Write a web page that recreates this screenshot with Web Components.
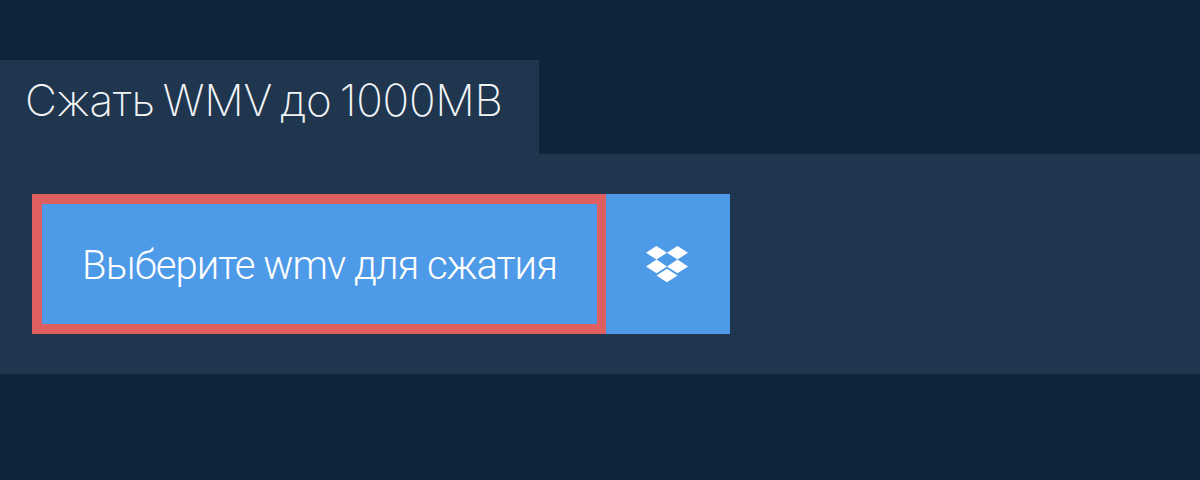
<!DOCTYPE html>
<html lang="ru">
<head>
<meta charset="utf-8">
<title>Сжать WMV</title>
<style>
  html, body { margin: 0; height: 100%; background: #0e2439; }
  body { overflow: hidden; }
</style>
</head>
<body>
<compress-panel heading="Сжать WMV до 1000MB">
  <picker-button>Выберите wmv для сжатия</picker-button>
  <dropbox-button></dropbox-button>
</compress-panel>

<script>
class CompressPanel extends HTMLElement {
  constructor() {
    super();
    this.attachShadow({ mode: 'open' });
  }

  connectedCallback() {
    this.shadowRoot.innerHTML = `
      <style>
        :host {
          display: block;
          padding-top: 60px;
        }

        .tab {
          display: flex;
          align-items: center;
          width: 539px;
          height: 94px;
          box-sizing: border-box;
          padding: 0 0 14px 25px;
          background: #20364f;
          color: #f2f4f6;
          font-family: "Inter", "Roboto", sans-serif;
          font-weight: 200;
          font-size: 44px;
          letter-spacing: -0.25px;
          word-spacing: -4px;
          white-space: nowrap;
        }

        .body {
          display: flex;
          height: 220px;
          box-sizing: border-box;
          padding: 40px 32px;
          background: #20364f;
        }
      </style>

      <div class="tab">${this.getAttribute('heading')}</div>
      <div class="body"><slot></slot></div>
    `;
  }
}

class PickerButton extends HTMLElement {
  constructor() {
    super();
    this.attachShadow({ mode: 'open' });
    this.shadowRoot.innerHTML = `
      <style>
        :host {
          display: flex;
          justify-content: center;
          align-items: center;
          width: 574px;
          height: 140px;
          box-sizing: border-box;
          border: 10px solid #dd5f5f;
          border-right-width: 9px;
          background: #4d9ae8;
          color: #fff;
          font-family: "Roboto", "Liberation Sans", sans-serif;
          font-weight: 300;
          font-size: 40px;
          letter-spacing: -0.97px;
          padding-top: 2px;
          white-space: nowrap;
        }
      </style>
      <slot></slot>
    `;
  }
}

class DropboxButton extends HTMLElement {
  constructor() {
    super();
    this.attachShadow({ mode: 'open' });
    this.shadowRoot.innerHTML = `
      <style>
        :host {
          display: flex;
          justify-content: center;
          align-items: center;
          width: 124px;
          height: 140px;
          background: #4d9ae8;
        }
        svg { display: block; width: 42px; height: 36px; margin-left: -2px; fill: #fff; }
      </style>
      <svg viewBox="0 0 42 36" aria-hidden="true">
        <path d="M10.5 0 21 6.8 10.5 13.6 0 6.8Z"/>
        <path d="M31.5 0 42 6.8 31.5 13.6 21 6.8Z"/>
        <path d="M0 20.4 10.5 13.6 21 20.4 10.5 27.2Z"/>
        <path d="M31.5 13.6 42 20.4 31.5 27.2 21 20.4Z"/>
        <path d="M10.5 29.5 21 22.7 31.5 29.5 21 36.3Z"/>
      </svg>
    `;
  }
}

customElements.define('compress-panel', CompressPanel);
customElements.define('picker-button', PickerButton);
customElements.define('dropbox-button', DropboxButton);
</script>
</body>
</html>
